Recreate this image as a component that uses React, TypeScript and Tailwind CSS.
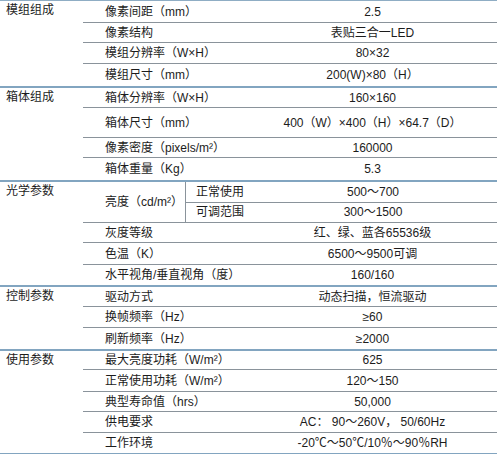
type Row = {
  name: string;
  value?: string;
  h: string;
  sub?: { label: string; value: string; h: string }[];
};

type Group = { title: string; rows: Row[] };

const groups: Group[] = [
  {
    title: "模组组成",
    rows: [
      { name: "像素间距（mm）", value: "2.5", h: "h-[22px]" },
      { name: "像素结构", value: "表贴三合一LED", h: "h-[20px]" },
      { name: "模组分辨率（W×H）", value: "80×32", h: "h-[21px]" },
      { name: "模组尺寸（mm）", value: "200(W)×80（H）", h: "h-[22px]" },
    ],
  },
  {
    title: "箱体组成",
    rows: [
      { name: "箱体分辨率（W×H）", value: "160×160", h: "h-[20px]" },
      { name: "箱体尺寸（mm）", value: "400（W）×400（H）×64.7（D）", h: "h-[30px]" },
      { name: "像素密度（pixels/m²）", value: "160000", h: "h-[20px]" },
      { name: "箱体重量（Kg）", value: "5.3", h: "h-[22px]" },
    ],
  },
  {
    title: "光学参数",
    rows: [
      {
        name: "亮度（cd/m²）",
        h: "h-[41px]",
        sub: [
          { label: "正常使用", value: "500～700", h: "h-[20px]" },
          { label: "可调范围", value: "300～1500", h: "h-[20px]" },
        ],
      },
      { name: "灰度等级", value: "红、绿、蓝各65536级", h: "h-[20px]" },
      { name: "色温（K）", value: "6500～9500可调", h: "h-[22px]" },
      { name: "水平视角/垂直视角（度）", value: "160/160", h: "h-[20px]" },
    ],
  },
  {
    title: "控制参数",
    rows: [
      { name: "驱动方式", value: "动态扫描，恒流驱动", h: "h-[20px]" },
      { name: "换帧频率（Hz）", value: "≥60", h: "h-[21px]" },
      { name: "刷新频率（Hz）", value: "≥2000", h: "h-[21px]" },
    ],
  },
  {
    title: "使用参数",
    rows: [
      { name: "最大亮度功耗（W/m²）", value: "625", h: "h-[19px]" },
      { name: "正常使用功耗（W/m²）", value: "120～150", h: "h-[22px]" },
      { name: "典型寿命值（hrs）", value: "50,000", h: "h-[20px]" },
      { name: "供电要求", value: "AC： 90～260V， 50/60Hz", h: "h-[21px]" },
      { name: "工作环境", value: "-20℃～50℃/10％～90％RH", h: "h-[20px]" },
    ],
  },
];

const App = () => {
  return (
    // SPEC TABLE
    <div className="w-[500px] h-[454px] bg-white overflow-hidden font-['Liberation_Sans','Noto_Sans_CJK_SC',sans-serif] text-[12px] text-[#1c1c1c]">
      <div className="w-[497px] border-t border-[#8fadc4]">
        {groups.map((group) => (
          <div key={group.title} className="flex border-b-2 border-[#82a5c0]">
            <div className="w-[83px] shrink-0 pl-[6px] pt-px leading-4">{group.title}</div>
            <div className="flex-1 flex flex-col">
              {group.rows.map((row, i) => {
                const last = i === group.rows.length - 1;
                return (
                  <div
                    key={row.name}
                    className={`flex items-center ${row.h} ${last ? "" : "border-b border-[#8a939b]"}`}
                  >
                    {row.sub ? (
                      <>
                        <div className="w-[102px] h-full flex items-center pl-[22px] leading-4">{row.name}</div>
                        <div className="flex-1 h-full flex flex-col border-l border-[#8a939b]">
                          {row.sub.map((s, j) => (
                            <div
                              key={s.label}
                              className={`flex-1 flex items-center ${j === 0 ? "border-b border-[#8a939b]" : ""}`}
                            >
                              <div className="w-[63px] pl-[10px] leading-4">{s.label}</div>
                              <div className="flex-1 text-center leading-4">{s.value}</div>
                            </div>
                          ))}
                        </div>
                      </>
                    ) : (
                      <>
                        <div className="w-[165px] pl-[22px] leading-4 whitespace-nowrap">{row.name}</div>
                        <div className="flex-1 text-center leading-4 whitespace-nowrap">{row.value}</div>
                      </>
                    )}
                  </div>
                );
              })}
            </div>
          </div>
        ))}
      </div>
    </div>
  );
};

export default App;
